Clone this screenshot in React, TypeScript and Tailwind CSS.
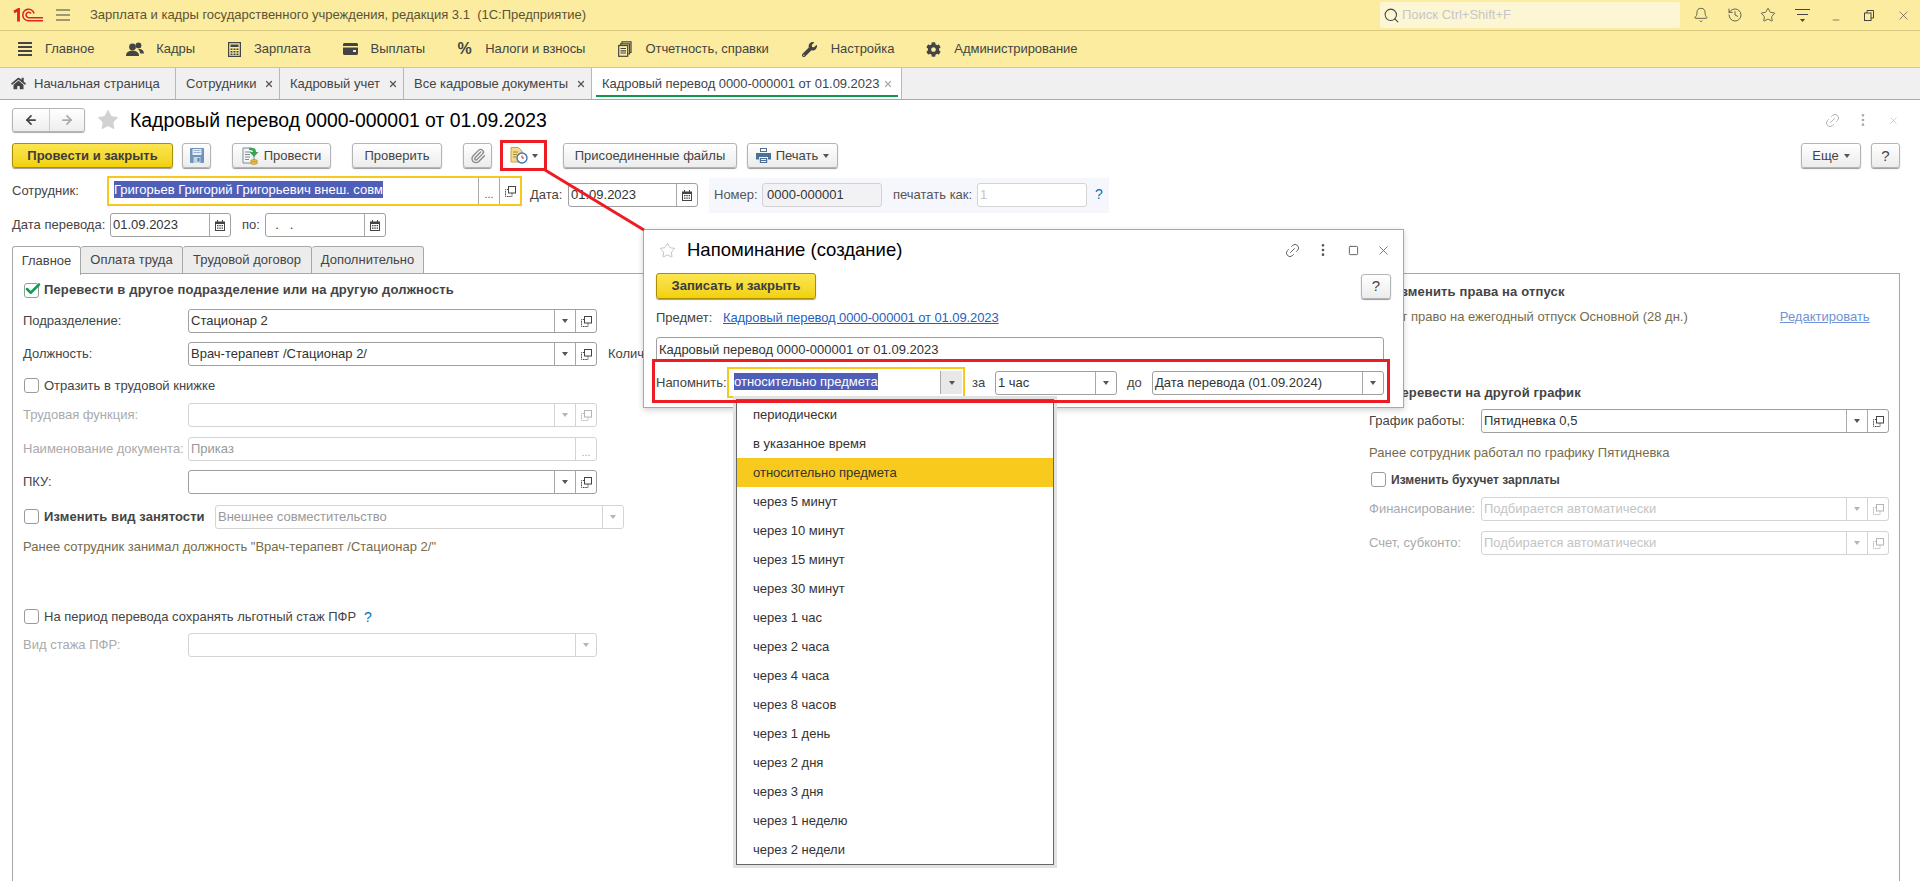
import { Bell, History, Star, Paperclip, Link2, EllipsisVertical, X, Search, ArrowLeft, ArrowRight, Check, Minus, Square } from "lucide-react";
import { FaCog, FaHome, FaWrench } from "react-icons/fa";
import type { ReactNode } from "react";

const menuItems = [
  { name: "Главное", icon: <BurgerIcon />, iconBox: "w-[14px]" },
  { name: "Кадры", icon: <PeopleIcon />, iconBox: "w-[17px]" },
  { name: "Зарплата", icon: <CalcIcon />, iconBox: "w-[14px]" },
  { name: "Выплаты", icon: <WalletIcon />, iconBox: "w-[15px]" },
  { name: "Налоги и взносы", icon: <span className="text-[16px] font-bold">%</span>, iconBox: "w-[15px]" },
  { name: "Отчетность, справки", icon: <ReportIcon />, iconBox: "w-[15px]" },
  { name: "Настройка", icon: <FaWrench size={15} color="#444" />, iconBox: "w-[17px]" },
  { name: "Администрирование", icon: <FaCog size={15} color="#444" />, iconBox: "w-[15px]" },
];

const openTabs = [
  { name: "Сотрудники", box: "w-[104px]" },
  { name: "Кадровый учет", box: "w-[124px]" },
  { name: "Все кадровые документы", box: "w-[188px]" },
];

const reminders = [
  "периодически",
  "в указанное время",
  "относительно предмета",
  "через 5 минут",
  "через 10 минут",
  "через 15 минут",
  "через 30 минут",
  "через 1 час",
  "через 2 часа",
  "через 4 часа",
  "через 8 часов",
  "через 1 день",
  "через 2 дня",
  "через 3 дня",
  "через 1 неделю",
  "через 2 недели",
];

function Logo() {
  return (
    <svg width="30" height="14" viewBox="0 0 30 14" fill="none" stroke="#d8281f" className="shrink-0">
      <path d="M1 4L5.500 1.500V13.500" strokeWidth="2.800" />
      <path d="M30 12.700H15.500A5.700 5.700 0 1 1 21 5.500" strokeWidth="1.600" />
      <path d="M30 9.700H15.500A2.700 2.700 0 1 1 18 5.500" strokeWidth="1.600" />
    </svg>
  );
}

function BurgerIcon() {
  return (
    <svg width="14" height="15" viewBox="0 0 14 15" fill="#444">
      <rect y="0" width="14" height="2" />
      <rect y="4" width="14" height="2" />
      <rect y="8" width="14" height="2" />
      <rect y="12" width="14" height="2" />
    </svg>
  );
}

function PeopleIcon() {
  return (
    <svg width="18" height="15" viewBox="0 0 18 15" fill="#444" className="shrink-0">
      <circle cx="6.500" cy="5" r="3.400" />
      <path d="M0 14c0-3.600 2.400-5.200 6.500-5.200S13 10.400 13 14z" />
      <circle cx="12.500" cy="3.400" r="2.900" />
      <path d="M12 7c3.500-.5 6 1 6 4.600h-3.800C14 9.600 13.200 8.200 12 7z" />
    </svg>
  );
}

function CalcIcon() {
  return (
    <svg width="13" height="15" viewBox="0 0 13 15">
      <rect x=".6" y=".6" width="11.800" height="13.800" fill="none" stroke="#444" strokeWidth="1.300" />
      <rect x="2.500" y="2.500" width="8" height="2.500" fill="#444" />
      <path d="M2.500 6.500h2v1.500h-2zM5.500 6.500h2v1.500h-2zM8.500 6.500h2v1.500h-2zM2.500 9h2v1.500h-2zM5.500 9h2v1.500h-2zM8.500 9h2v1.500h-2zM2.500 11.500h2V13h-2zM5.500 11.500h2V13h-2zM8.500 11.500h2V13h-2z" fill="#444" />
    </svg>
  );
}

function WalletIcon() {
  return (
    <svg width="15" height="12" viewBox="0 0 15 12" fill="#444">
      <path d="M0 1.500C0 .7.700 0 1.500 0h12c.8 0 1.500.7 1.500 1.500V3H0z" />
      <path d="M0 4.500h15v6c0 .8-.7 1.500-1.500 1.500h-12C.7 12 0 11.300 0 10.500zM10 7v2h3V7z" />
    </svg>
  );
}

function ReportIcon() {
  return (
    <svg width="14" height="16" viewBox="0 0 14 16" fill="none" stroke="#444" strokeWidth="1.200">
      <path d="M4 3V.8h9v10.700h-2" />
      <path d="M2.500 4.500V2.800h9V13H10" />
      <rect x=".7" y="4.500" width="9" height="10.800" />
      <path d="M2.500 7.500h5.500M2.500 9.800h5.500M2.500 12h5.500" />
    </svg>
  );
}

function CopyIcon({ muted }: { muted?: boolean }) {
  const c = muted ? "#b5b5b5" : "#444";
  return (
    <svg width="11" height="11" viewBox="0 0 11 11" fill="none" stroke={c} strokeWidth="1">
      <rect x="3.500" y=".5" width="7" height="6.500" />
      <path d="M3.500 3.500H.5v7h6.500V7" strokeDasharray="1.500 .8" />
    </svg>
  );
}

function CalendarIcon() {
  return (
    <svg width="10" height="11" viewBox="0 0 10 11" fill="#444">
      <path d="M2 0h1v1.500h4V0h1v1.500h2V11H0V1.500h2zM1 4v6h8V4z" />
      <path d="M2 5h1.500v1.200H2zM4.300 5h1.500v1.200H4.300zM6.600 5h1.400v1.200H6.600zM2 7.500h1.500v1.200H2zM4.300 7.500h1.500v1.200H4.300zM6.600 7.500h1.400v1.200H6.600z" />
    </svg>
  );
}

function Caret({ muted }: { muted?: boolean }) {
  return <span className={`block w-0 h-0 border-x-[3px] border-x-transparent border-t-[4px] ${muted ? "border-t-[#b5b5b5]" : "border-t-[#555]"}`} />;
}

function FieldBtn({ box, muted, children }: { box: string; muted?: boolean; children: ReactNode }) {
  return <span className={`${box} h-full flex items-center justify-center border-l shrink-0 ${muted ? "border-[#d4d4d4]" : "border-[#a8a8a8]"}`}>{children}</span>;
}

function Field({
  box,
  value,
  muted,
  faded,
  children,
}: {
  box: string;
  value?: string;
  muted?: boolean;
  faded?: boolean;
  children?: ReactNode;
}) {
  return (
    <div className={`${box} h-[24px] flex items-stretch rounded-[3px] border bg-white shrink-0 ${muted ? "border-[#d4d4d4]" : "border-[#a0a0a0]"}`}>
      <span className={`flex-1 min-w-0 px-[2px] leading-[22px] whitespace-nowrap overflow-hidden ${muted ? (faded ? "text-[#c4c4c4]" : "text-[#999]") : "text-[#333]"}`}>{value}</span>
      {children}
    </div>
  );
}

function Tick({ checked }: { checked?: boolean }) {
  return (
    <span className="relative block w-[15px] h-[15px] rounded-[3px] border border-[#9a9a9a] bg-white shrink-0">
      {checked && <Check size={18} strokeWidth={3.4} className="absolute -top-[4px] -left-[1px] text-[#0f9d58]" />}
    </span>
  );
}

function Btn({ box, children }: { box: string; children: ReactNode }) {
  return (
    <div className={`${box} h-[25px] flex items-center justify-center gap-[5px] shrink-0 rounded-[3px] border border-[#b4b4b4] bg-gradient-to-b from-white to-[#ececec] shadow-[0_1px_1px_#9a9a9a] text-[#444]`}>
      {children}
    </div>
  );
}

function SaveIcon() {
  return (
    <svg width="14" height="15" viewBox="0 0 14 15">
      <rect width="14" height="15" rx="1" fill="#6f93bb" />
      <rect x="2.500" y="1" width="9" height="6" fill="#e9eef4" />
      <path d="M3.500 2.500h7M3.500 4.500h7" stroke="#9db5cf" />
      <rect x="3.500" y="9" width="7" height="6" fill="#c9d4e0" />
      <rect x="7.500" y="10" width="2" height="3.500" fill="#5b7fa8" />
    </svg>
  );
}

function PostIcon() {
  return (
    <svg width="17" height="18" viewBox="0 0 17 18">
      <path d="M1 1h9l2 2v13H1z" fill="#f4f6f6" stroke="#7d8b92" />
      <path d="M3 5h6M3 7.500h5M3 10h5M3 12.500h4" stroke="#7d8b92" />
      <path d="M7 1h3.500c2.500 0 3.500 1.500 3.500 4h2.500L12 10 7.500 5H11c0-1.500-1.500-2-4-2z" fill="#3aa655" />
      <ellipse cx="12" cy="14" rx="3.500" ry="1.400" fill="#efc04a" stroke="#a8842c" strokeWidth=".6" />
      <ellipse cx="12" cy="16" rx="3.500" ry="1.400" fill="#efc04a" stroke="#a8842c" strokeWidth=".6" />
    </svg>
  );
}

function DocClockIcon() {
  return (
    <svg width="18" height="17" viewBox="0 0 18 17">
      <path d="M1 .5h7.500L12 4v11H1z" fill="#f5d98c" stroke="#c9a24a" />
      <path d="M3 5h5M3 7.500h4M3 10h3" stroke="#a8842c" />
      <circle cx="12" cy="11" r="5" fill="#fff" stroke="#3c78b5" strokeWidth="1.400" />
      <path d="M12 8.500V11h2" fill="none" stroke="#d8281f" />
    </svg>
  );
}

function PrinterIcon() {
  return (
    <svg width="15" height="15" viewBox="0 0 15 15" fill="#4d7097">
      <path d="M4 0h7v4H4zM5 1v2h5V1z" />
      <path d="M0 5h15v6.500h-3V9H3v2.500H0z" />
      <path d="M3.800 10h7.400v5H3.800zM5 11v1h5v-1zM5 13v1h5v-1z" />
    </svg>
  );
}

export default function App() {
  return (
    <div className="relative w-[1920px] h-[881px] overflow-hidden bg-white text-[13px] leading-4 text-[#444] font-['Liberation_Sans',Arial,sans-serif]">
      {/* title bar */}
      <div className="h-[31px] flex items-center bg-[#fbec9f] border-b border-[#d8c97e]">
        <div className="w-[56px] pl-[13px] flex shrink-0">
          <Logo />
        </div>
        <svg width="14" height="12" viewBox="0 0 14 12" stroke="#444" strokeWidth="1.200" className="shrink-0">
          <path d="M0 1h14M0 6h14M0 11h14" />
        </svg>
        <span className="ml-[20px] text-[#5c5334] whitespace-nowrap">Зарплата и кадры государственного учреждения, редакция 3.1&nbsp; (1С:Предприятие)</span>
        <div className="ml-auto w-[300px] h-[26px] flex items-center gap-[2px] rounded-[2px] bg-[#fdf6d5] pl-[3px]">
          <Search size={17} strokeWidth={1.5} className="text-[#444]" />
          <span className="text-[#c6c6c6]">Поиск Ctrl+Shift+F</span>
        </div>
        <div className="ml-[2px] w-[238px] pl-[2px] flex items-center text-[#444]">
          <span className="w-[34px] flex justify-center"><Bell size={16} strokeWidth={1.2} /></span>
          <span className="w-[34px] flex justify-center"><History size={16} strokeWidth={1.2} /></span>
          <span className="w-[34px] flex justify-center"><Star size={16} strokeWidth={1.2} /></span>
          <span className="w-[34px] flex justify-center">
            <svg width="15" height="15" viewBox="0 0 15 15" stroke="#444" fill="none">
              <path d="M0 1.500h15M2 6.500h11" />
              <path d="M5 11h5l-2.500 3z" fill="#444" stroke="none" />
            </svg>
          </span>
          <span className="w-[34px] flex justify-center pt-[10px]"><Minus size={10} strokeWidth={1.5} /></span>
          <span className="w-[34px] flex justify-center">
            <svg width="10" height="11" viewBox="0 0 10 11" fill="none" stroke="#444">
              <rect x=".5" y="3" width="6.500" height="7.500" />
              <path d="M3 3V.5h6.500v7.500H7" />
            </svg>
          </span>
          <span className="w-[34px] flex justify-center"><X size={15} strokeWidth={1} /></span>
        </div>
      </div>

      {/* section menu */}
      <div className="h-[37px] flex items-center gap-[32px] pl-[18px] bg-[#fbec9f] border-b border-[#d8c97e]">
        {menuItems.map((item) => (
          <div key={item.name} className="flex items-center gap-[13px] text-[#444]">
            <span className={`${item.iconBox} flex justify-center`}>{item.icon}</span>
            <span className="whitespace-nowrap tracking-[-0.05px]">{item.name}</span>
          </div>
        ))}
      </div>

      {/* open windows */}
      <div className="h-[32px] flex items-stretch bg-[#f0f0f0] border-b border-[#a8a8a8]">
        <div className="w-[176px] flex items-center gap-[8px] pl-[11px] border-r border-[#b8b8b8]">
          <FaHome size={15} color="#444" />
          <span>Начальная страница</span>
        </div>
        {openTabs.map((tab) => (
          <div key={tab.name} className={`${tab.box} flex items-center justify-between pl-[10px] pr-[5px] border-r border-[#b8b8b8]`}>
            <span className="whitespace-nowrap">{tab.name}</span>
            <X size={10} strokeWidth={3} className="text-[#555]" />
          </div>
        ))}
        <div className="relative w-[310px] flex items-center justify-between pl-[10px] pr-[8px] bg-white border-r border-[#b8b8b8]">
          <span className="whitespace-nowrap tracking-[-0.05px]">Кадровый перевод 0000-000001 от 01.09.2023</span>
          <X size={10} strokeWidth={3} className="text-[#aaa]" />
          <span className="absolute left-[4px] right-[3px] bottom-[2px] h-[2px] bg-[#0b9a4b]" />
        </div>
      </div>

      {/* form */}
      <div className="pl-[12px] pr-[20px]">
        <div className="h-[24px] mt-[8px] flex items-center">
          <div className="w-[73px] h-full flex rounded-[3px] border border-[#b4b4b4] bg-gradient-to-b from-white to-[#eee] shadow-[0_1px_1px_#aaa]">
            <span className="w-[37px] flex items-center justify-center border-r border-[#ccc]"><ArrowLeft size={14} strokeWidth={3} className="text-[#444]" /></span>
            <span className="flex-1 flex items-center justify-center"><ArrowRight size={14} strokeWidth={3} className="text-[#aaa]" /></span>
          </div>
          <Star size={24} fill="#d2d2d2" strokeWidth={0} className="ml-[11px]" />
          <h1 className="ml-[10px] text-[19.4px] leading-6 text-black whitespace-nowrap">Кадровый перевод 0000-000001 от 01.09.2023</h1>
          <div className="ml-auto flex items-center text-[#aaa]">
            <Link2 size={17} strokeWidth={1.2} className="-rotate-45" />
            <EllipsisVertical size={16} strokeWidth={2} className="ml-[14px]" />
            <X size={11} strokeWidth={1.2} className="ml-[17px] mr-[1px]" />
          </div>
        </div>

        <div className="h-[25px] mt-[11px] flex items-center">
          <div className="w-[161px] h-full shrink-0 flex items-center justify-center rounded-[3px] border border-[#a89000] bg-gradient-to-b from-[#fbe64f] to-[#f2d100] shadow-[0_1px_1px_#9a9a9a] font-bold text-[#3c3c3c]">Провести и закрыть</div>
          <div className="ml-[9px]"><Btn box="w-[29px]"><SaveIcon /></Btn></div>
          <div className="ml-[21px]"><Btn box="w-[99px]"><PostIcon /><span>Провести</span></Btn></div>
          <div className="ml-[21px]"><Btn box="w-[90px]">Проверить</Btn></div>
          <div className="ml-[21px]"><Btn box="w-[29px]"><Paperclip size={16} strokeWidth={2} className="text-[#888]" /></Btn></div>
          <div className="ml-[9px] w-[45px] h-full flex items-center justify-center gap-[4px]"><DocClockIcon /><Caret /></div>
          <div className="ml-[17px]"><Btn box="w-[174px]">Присоединенные файлы</Btn></div>
          <div className="ml-[10px]"><Btn box="w-[91px]"><PrinterIcon /><span>Печать</span><Caret /></Btn></div>
          <div className="ml-auto"><Btn box="w-[60px]"><span>Еще</span><Caret /></Btn></div>
          <div className="ml-[10px]"><Btn box="w-[29px]"><span className="text-[15px]">?</span></Btn></div>
        </div>

        <div className="h-[37px] mt-[8px] flex items-start">
          <span className="w-[95px] shrink-0 pt-[7px]">Сотрудник:</span>
          <div className="w-[415px] h-[30px] shrink-0 flex items-stretch border-2 border-[#f9c81c] bg-white">
            <span className="flex-1 pl-[5px] pt-[3px]">
              <span className="inline-block bg-[#4f5fb8] text-white leading-[17px] whitespace-nowrap">Григорьев Григорий Григорьевич внеш. совм</span>
            </span>
            <FieldBtn box="w-[21px]"><span className="text-[11px] text-[#555] pt-[6px]">...</span></FieldBtn>
            <FieldBtn box="w-[21px]"><CopyIcon /></FieldBtn>
          </div>
          <span className="ml-[8px] pt-[11px] w-[38px] shrink-0">Дата:</span>
          <div className="mt-[7px]">
            <Field box="w-[130px]" value="01.09.2023">
              <FieldBtn box="w-[21px]"><CalendarIcon /></FieldBtn>
            </Field>
          </div>
          <div className="ml-[11px] mt-[2px] w-[400px] h-[35px] flex items-start gap-0 bg-[#f5f7fc] pl-[5px] pt-[5px]">
            <span className="w-[48px] pt-[4px] text-[#555]">Номер:</span>
            <div className="w-[120px] h-[24px] px-[4px] leading-[22px] rounded-[3px] border border-[#d2d2d2] bg-[#f2f2f5] text-[#333]">0000-000001</div>
            <span className="ml-[11px] w-[84px] pt-[4px] text-[#555] whitespace-nowrap">печатать как:</span>
            <Field box="w-[110px]" value="1" muted faded />
            <span className="ml-[8px] pt-[3px] text-[14px] text-[#0b6fb8]">?</span>
          </div>
        </div>

        <div className="h-[24px] flex items-center">
          <span className="w-[98px] shrink-0 whitespace-nowrap">Дата перевода:</span>
          <Field box="w-[121px]" value="01.09.2023">
            <FieldBtn box="w-[21px]"><CalendarIcon /></FieldBtn>
          </Field>
          <span className="ml-[11px] w-[23px]">по:</span>
          <Field box="w-[121px]" value={"\u00a0\u00a0.\u00a0\u00a0\u00a0."}>
            <FieldBtn box="w-[21px]"><CalendarIcon /></FieldBtn>
          </Field>
        </div>

        <div className="h-[28px] mt-[9px] flex items-stretch">
          <div className="w-[69px] flex items-center justify-center rounded-t-[3px] border border-b-0 border-[#a8a8a8] bg-white relative z-10 -mb-px">Главное</div>
          <div className="w-[102px] flex items-center justify-center rounded-t-[3px] border border-l-0 border-[#a8a8a8] bg-[#ececec]">Оплата труда</div>
          <div className="w-[129px] flex items-center justify-center rounded-t-[3px] border border-l-0 border-[#a8a8a8] bg-[#ececec]">Трудовой договор</div>
          <div className="w-[112px] flex items-center justify-center rounded-t-[3px] border border-l-0 border-[#a8a8a8] bg-[#ececec]">Дополнительно</div>
        </div>

        <div className="h-[620px] -mt-px flex border border-[#a8a8a8] pl-[10px]">
          <div className="w-[1346px] shrink-0">
            <div className="mt-[8px] h-[16px] flex items-center gap-[5px] pl-[1px]">
              <Tick checked />
              <span className="font-bold tracking-[0.15px]">Перевести в другое подразделение или на другую должность</span>
            </div>
            <div className="mt-[11px] flex items-center">
              <span className="w-[165px]">Подразделение:</span>
              <Field box="w-[409px]" value="Стационар 2">
                <FieldBtn box="w-[21px]"><Caret /></FieldBtn>
                <FieldBtn box="w-[21px]"><CopyIcon /></FieldBtn>
              </Field>
            </div>
            <div className="mt-[9px] flex items-center">
              <span className="w-[165px]">Должность:</span>
              <Field box="w-[409px]" value="Врач-терапевт /Стационар 2/">
                <FieldBtn box="w-[21px]"><Caret /></FieldBtn>
                <FieldBtn box="w-[21px]"><CopyIcon /></FieldBtn>
              </Field>
              <span className="ml-[11px] w-[35px] overflow-hidden whitespace-nowrap">Количество</span>
            </div>
            <div className="mt-[12px] h-[15px] flex items-center gap-[5px] pl-[1px]">
              <Tick />
              <span>Отразить в трудовой книжке</span>
            </div>
            <div className="mt-[10px] flex items-center">
              <span className="w-[165px] text-[#aaa]">Трудовая функция:</span>
              <Field box="w-[409px]" muted>
                <FieldBtn box="w-[21px]" muted><Caret muted /></FieldBtn>
                <FieldBtn box="w-[21px]" muted><CopyIcon muted /></FieldBtn>
              </Field>
            </div>
            <div className="mt-[10px] flex items-center">
              <span className="w-[165px] text-[#aaa] whitespace-nowrap">Наименование документа:</span>
              <Field box="w-[409px]" value="Приказ" muted>
                <FieldBtn box="w-[21px]" muted><span className="text-[11px] text-[#aaa] pt-[5px]">...</span></FieldBtn>
              </Field>
            </div>
            <div className="mt-[9px] flex items-center">
              <span className="w-[165px]">ПКУ:</span>
              <Field box="w-[409px]">
                <FieldBtn box="w-[21px]"><Caret /></FieldBtn>
                <FieldBtn box="w-[21px]"><CopyIcon /></FieldBtn>
              </Field>
            </div>
            <div className="mt-[10px] h-[25px] flex items-center pl-[1px]">
              <Tick />
              <span className="ml-[5px] w-[171px] font-bold whitespace-nowrap tracking-[0.1px]">Изменить вид занятости</span>
              <Field box="w-[409px]" value="Внешнее совместительство" muted>
                <FieldBtn box="w-[21px]" muted><Caret muted /></FieldBtn>
              </Field>
            </div>
            <p className="mt-[10px] h-[16px] text-[#756c4e]">Ранее сотрудник занимал должность "Врач-терапевт /Стационар 2/"</p>
            <div className="mt-[54px] h-[15px] flex items-center gap-[5px] pl-[1px]">
              <Tick />
              <span>На период перевода сохранять льготный стаж ПФР</span>
              <span className="ml-[3px] text-[14px] text-[#0b6fb8]">?</span>
            </div>
            <div className="mt-[9px] flex items-center">
              <span className="w-[165px] text-[#aaa]">Вид стажа ПФР:</span>
              <Field box="w-[409px]" muted>
                <FieldBtn box="w-[21px]" muted><Caret muted /></FieldBtn>
              </Field>
            </div>
          </div>

          <div className="w-[520px] shrink-0">
            <div className="mt-[10px] h-[15px] flex items-center gap-[6px] pl-[2px]">
              <Tick />
              <span className="font-bold tracking-[0.15px]">Изменить права на отпуск</span>
            </div>
            <div className="mt-[10px] h-[16px] flex items-center">
              <span className="text-[#756c4e] whitespace-nowrap">Имеет право на ежегодный отпуск Основной (28 дн.)</span>
              <span className="ml-[92px] text-[#6f93d6] underline">Редактировать</span>
            </div>
            <div className="mt-[60px] h-[15px] flex items-center gap-[6px] pl-[2px]">
              <Tick />
              <span className="font-bold tracking-[0.15px]">Перевести на другой график</span>
            </div>
            <div className="mt-[9px] flex items-center">
              <span className="w-[112px]">График работы:</span>
              <Field box="w-[408px]" value="Пятидневка 0,5">
                <FieldBtn box="w-[21px]"><Caret /></FieldBtn>
                <FieldBtn box="w-[21px]"><CopyIcon /></FieldBtn>
              </Field>
            </div>
            <p className="mt-[12px] h-[16px] text-[#756c4e]">Ранее сотрудник работал по графику Пятидневка</p>
            <div className="mt-[11px] h-[15px] flex items-center gap-[5px] pl-[2px]">
              <Tick />
              <span className="font-bold text-[12px]">Изменить бухучет зарплаты</span>
            </div>
            <div className="mt-[10px] flex items-center">
              <span className="w-[112px] text-[#aaa] whitespace-nowrap">Финансирование:</span>
              <Field box="w-[408px]" value="Подбирается автоматически" muted faded>
                <FieldBtn box="w-[21px]" muted><Caret muted /></FieldBtn>
                <FieldBtn box="w-[21px]" muted><CopyIcon muted /></FieldBtn>
              </Field>
            </div>
            <div className="mt-[10px] flex items-center">
              <span className="w-[112px] text-[#aaa]">Счет, субконто:</span>
              <Field box="w-[408px]" value="Подбирается автоматически" muted faded>
                <FieldBtn box="w-[21px]" muted><Caret muted /></FieldBtn>
                <FieldBtn box="w-[21px]" muted><CopyIcon muted /></FieldBtn>
              </Field>
            </div>
          </div>
        </div>
      </div>

      {/* reminder dialog */}
      <div className="absolute left-[643px] top-[229px] w-[761px] h-[179px] px-[12px] border border-[#a8a8a8] bg-white shadow-[0_2px_6px_rgba(0,0,0,0.18)]">
        <div className="h-[24px] mt-[8px] flex items-center">
          <Star size={17} strokeWidth={1} className="ml-[3px] text-[#aaa]" />
          <span className="ml-[11px] text-[18.5px] leading-6 text-black whitespace-nowrap">Напоминание (создание)</span>
          <div className="ml-auto flex items-center text-[#555]">
            <Link2 size={17} strokeWidth={1.2} className="-rotate-45" />
            <EllipsisVertical size={16} strokeWidth={2} className="ml-[14px]" />
            <Square size={11} strokeWidth={2} className="ml-[17px]" />
            <X size={15} strokeWidth={1.2} className="ml-[17px]" />
          </div>
        </div>
        <div className="h-[26px] mt-[11px] flex items-center justify-between">
          <div className="w-[160px] h-full flex items-center justify-center rounded-[3px] border border-[#a89000] bg-gradient-to-b from-[#fbe64f] to-[#f2d100] shadow-[0_1px_1px_#9a9a9a] font-bold text-[#3c3c3c]">Записать и закрыть</div>
          <Btn box="w-[30px]"><span className="text-[15px]">?</span></Btn>
        </div>
        <div className="h-[16px] mt-[11px] flex items-center">
          <span className="w-[67px] shrink-0">Предмет:</span>
          <span className="text-[#1f5fbf] underline whitespace-nowrap tracking-[-0.09px]">Кадровый перевод 0000-000001 от 01.09.2023</span>
        </div>
        <div className="w-[728px] h-[25px] mt-[11px] px-[2px] leading-[23px] rounded-[3px] border border-[#a0a0a0] text-[#333]">Кадровый перевод 0000-000001 от 01.09.2023</div>
        <div className="h-[31px] mt-[5px] flex items-center">
          <span className="w-[71px] shrink-0">Напомнить:</span>
          <div className="w-[238px] h-[31px] flex items-stretch border-2 border-[#f9c81c] bg-white">
            <span className="flex-1 pl-[5px] pt-[4px]">
              <span className="inline-block bg-[#4f5fb8] text-white leading-[17px] whitespace-nowrap">относительно предмета</span>
            </span>
            <span className="w-[22px] my-[2px] mr-[1px] flex items-center justify-center border-l border-[#a8a8a8] bg-[#e8e8e8]"><Caret /></span>
          </div>
          <span className="ml-[7px] w-[23px]">за</span>
          <Field box="w-[122px]" value="1 час">
            <FieldBtn box="w-[21px]"><Caret /></FieldBtn>
          </Field>
          <span className="ml-[10px] w-[25px]">до</span>
          <Field box="w-[232px]" value="Дата перевода (01.09.2024)">
            <FieldBtn box="w-[21px]"><Caret /></FieldBtn>
          </Field>
        </div>
      </div>

      {/* open select list */}
      <div className="absolute left-[736px] top-[399px] w-[318px] border border-[#666] bg-white shadow-[0_0_0_3px_#e2e2e2]">
        {reminders.map((text) => (
          <div key={text} className={`h-[29px] flex items-center pl-[16px] text-[#333] ${text === "относительно предмета" ? "bg-[#f9ca1e]" : ""}`}>
            {text}
          </div>
        ))}
      </div>

      {/* annotation in red */}
      <div className="absolute left-[500px] top-[140px] w-[47px] h-[31px] border-[3px] border-[#ed1c24]" />
      <div className="absolute left-[652px] top-[359px] w-[738px] h-[44px] border-[3px] border-[#ed1c24]" />
      <svg className="absolute left-[540px] top-[165px]" width="110" height="70" viewBox="0 0 110 70">
        <path d="M5 5L104 65" stroke="#ed1c24" strokeWidth="3" />
      </svg>
    </div>
  );
}
